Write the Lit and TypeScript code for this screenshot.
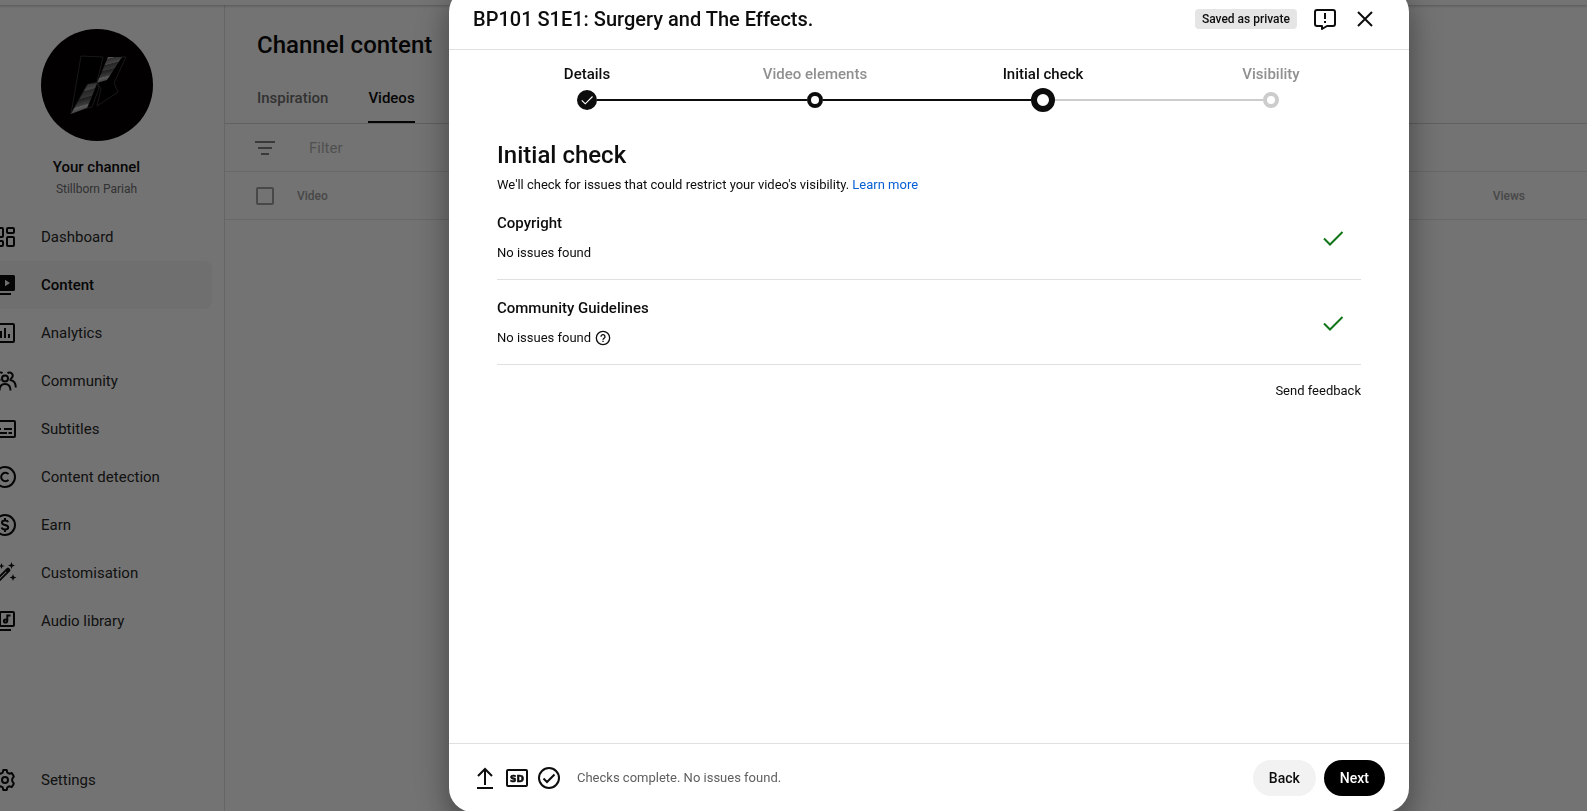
import { LitElement, html, css, svg, nothing } from "lit";
import { customElement, state } from "lit/decorators.js";
import { classMap } from "lit/directives/class-map.js";

const icon = (body: unknown, size = 24, label = "") => html`<svg
  width=${size}
  height=${size}
  viewBox="0 0 24 24"
  fill="none"
  stroke="currentColor"
  stroke-width="2"
  role=${label ? "img" : nothing}
  aria-label=${label || nothing}
  aria-hidden=${label ? nothing : "true"}
>${body}</svg>`;

const glyphs = {
  dashboard: svg`<rect x="3" y="3" width="7" height="9" rx="1"/><rect x="14" y="3" width="7" height="5" rx="1"/><rect x="14" y="12" width="7" height="9" rx="1"/><rect x="3" y="16" width="7" height="5" rx="1"/>`,
  content: svg`<path fill="currentColor" stroke="none" fill-rule="evenodd" d="M7.500 2h13A1.500 1.500 0 0 1 22 3.500v13a1.500 1.500 0 0 1-1.500 1.500h-13A1.500 1.500 0 0 1 6 16.500v-13A1.500 1.500 0 0 1 7.500 2zM12 6.800v6.400l5-3.200z"/><path d="M3 6v13.500a1.500 1.500 0 0 0 1.500 1.500H18"/>`,
  analytics: svg`<rect x="3" y="3" width="18" height="18" rx="1"/><path d="M8 10v7M12 7v10M16 13v4"/>`,
  community: svg`<circle cx="12" cy="9.500" r="3"/><path d="M6.500 21.500c0-4 2.200-6.500 5.500-6.500s5.500 2.500 5.500 6.500M14.500 4.200A3 3 0 1 1 18.600 9c-.9.700-1.300 1.300-1.100 2 3 .5 5.300 3 5.300 7.500M9.500 4.200A3 3 0 1 0 5.400 9c.9.700 1.300 1.300 1.100 2-3 .5-5.300 3-5.300 7.500"/>`,
  subtitles: svg`<rect x="2" y="4" width="20" height="16" rx="1"/><path d="M5 12h3M11 12h8M5 16h9M15.500 16H19"/>`,
  detection: svg`<circle cx="12" cy="12" r="10"/><path d="M15.500 9.200a4.200 4.200 0 1 0 0 5.600"/>`,
  earn: svg`<circle cx="12" cy="12" r="10"/><path d="M15.200 9.200C14.700 8 13.500 7.500 12 7.500c-1.900 0-3 .9-3 2.200 0 3 6.200 1.500 6.200 4.600 0 1.300-1.200 2.200-3.200 2.200-1.700 0-2.900-.7-3.400-2M12 5v3M12 16v3"/>`,
  customise: svg`<path fill="currentColor" stroke="none" fill-rule="evenodd" d="M13.600 7.300a1.900 1.900 0 0 1 2.700 0l.5.500a1.900 1.900 0 0 1 0 2.700L5 22.300 1.700 19zM13 10.500 4.500 19l.6.600 8.500-8.500zM18.500 1l.9 2.600 2.600.9-2.600.9-.9 2.600-.9-2.600-2.600-.9 2.600-.9zM20 13l.9 2.600 2.600.9-2.600.9L20 20l-.9-2.600-2.600-.9 2.600-.9zM8.500 2l.8 2.200 2.200.8-2.200.8-.8 2.200-.8-2.200L5.500 5l2.200-.8z"/>`,
  audio: svg`<rect x="7" y="3" width="14" height="14" rx="1"/><path d="M3 6v13.500a1.500 1.500 0 0 0 1.500 1.500H18"/><circle cx="12.500" cy="12" r="1.600"/><path d="M14.300 12V5.500M14 6.500h3.500"/>`,
  settings: svg`<circle cx="12" cy="12" r="3"/><path stroke-linejoin="round" d="M10.300 2h3.400l.6 2.600 1.900 1.100 2.600-.8 1.700 2.900c.5.800.3 1.200-.4 1.800-.8.700-1 1.500-1 2.400s.2 1.700 1 2.400c.7.600.9 1 .4 1.800l-1.700 2.900-2.600-.8-1.900 1.100-.6 2.600h-3.400l-.6-2.600-1.900-1.100-2.600.8-1.700-2.900c-.5-.8-.3-1.200.4-1.800.8-.7 1-1.500 1-2.400s-.2-1.700-1-2.400c-.7-.6-.9-1-.4-1.800l1.700-2.900 2.600.8 1.900-1.100z"/>`,
  filter: svg`<path d="M2 6h20M5 12h14M8 18h8"/>`,
  feedback: svg`<path stroke-linejoin="round" d="M4 3h16a2 2 0 0 1 2 2v12a2 2 0 0 1-2 2h-6l-5 3v-3H4a2 2 0 0 1-2-2V5a2 2 0 0 1 2-2z"/><path d="M12 6v6M12 14v2"/>`,
  close: svg`<path d="m5 5 14 14M19 5 5 19"/>`,
  upload: svg`<path d="M12 19V3M5 10l7-7 7 7M4 22h16"/>`,
  sd: svg`<rect x="2" y="4" width="20" height="16" rx="1"/><text class="sd" x="12" y="16" text-anchor="middle">SD</text>`,
  checked: svg`<circle cx="12" cy="12" r="10"/><path d="m6.500 12.500 3.500 3.500 7.500-7.500"/>`,
  help: svg`<circle cx="12" cy="12" r="10"/><path d="M9 10a3 3 0 1 1 4.500 2.500c-1 .6-1.500 1-1.500 2M12 16v2"/>`,
  tick: svg`<path d="m3 12.500 6 6L21.500 6"/>`,
};

const channelLogo = html`<svg class="avatar" viewBox="0 0 112 112" role="img" aria-label="Stillborn Pariah">
  <defs>
    <linearGradient id="sheen" x1="0" y1="0" x2=".25" y2="1">
      <stop offset="0" stop-color="#aaa" /><stop offset=".16" stop-color="#bbb" />
      <stop offset=".18" stop-color="#666" /><stop offset=".36" stop-color="#999" />
      <stop offset=".38" stop-color="#555" /><stop offset=".56" stop-color="#777" />
      <stop offset=".58" stop-color="#444" /><stop offset=".78" stop-color="#888" />
      <stop offset=".8" stop-color="#ccc" /><stop offset="1" stop-color="#777" />
    </linearGradient>
  </defs>
  <circle cx="56" cy="56" r="56" fill="#050000" />
  <g stroke="#444" stroke-width=".8">
    <path fill="#000" d="m40 27 22 1-6 25-10 3-16 29z" />
    <path fill="#000" d="m85 28-12 26 4 9-21 14 4-17-4-7 10-3 14-22z" />
    <path fill="#000" d="m56 54-10 25 5-1 7-19z" />
    <path fill="url(#sheen)" stroke="none" d="m67 28 14 0-15 23-10 3z" />
    <path fill="url(#sheen)" stroke="none" d="m47 55 9-1-10 25-16 6z" />
  </g>
</svg>`;

const navItems = [
  { label: "Dashboard", glyph: glyphs.dashboard },
  { label: "Content", glyph: glyphs.content, active: true },
  { label: "Analytics", glyph: glyphs.analytics },
  { label: "Community", glyph: glyphs.community },
  { label: "Subtitles", glyph: glyphs.subtitles },
  { label: "Content detection", glyph: glyphs.detection },
  { label: "Earn", glyph: glyphs.earn },
  { label: "Customisation", glyph: glyphs.customise },
  { label: "Audio library", glyph: glyphs.audio },
];

const base = css`
  * { box-sizing: border-box; }
  :host { display: block; font-family: Roboto, "Liberation Sans", sans-serif; color: #0d0d0d; }
  h1, h2, h3, p, ul, ol { margin: 0; padding: 0; list-style: none; }
  a { color: inherit; text-decoration: none; }
  button { font: inherit; color: inherit; border: 0; background: none; padding: 0; cursor: pointer; }
  svg { display: block; flex: none; }
  .display { font-size: 24px; line-height: 32px; font-weight: 500; }
`;

@customElement("studio-sidebar")
class StudioSidebar extends LitElement {
  static styles = [base, css`
    :host { display: flex; flex-direction: column; border-right: 1px solid #e0e0e0; }
    .channel { display: flex; flex-direction: column; align-items: center; padding: 24px 0 16px; }
    .avatar { width: 112px; height: 112px; }
    .name { margin-top: 16px; font-size: 15px; line-height: 20px; font-weight: 500; }
    .owner { margin-top: 4px; font-size: 12px; line-height: 16px; color: #707070; }
    nav { flex: 1; display: flex; flex-direction: column; justify-content: space-between; padding-bottom: 7px; }
    .item { display: flex; align-items: center; gap: 24px; height: 48px; margin-right: 12px; padding-left: 24px; font-size: 15px; color: #282828; border-radius: 0 8px 8px 0; }
    .item.active { background: #f5f5f5; font-weight: 500; color: #0d0d0d; }
    .item svg { color: #0d0d0d; }
  `];
  private item(label: string, glyph: unknown, active = false) {
    return html`<a href="#" class=${classMap({ item: true, active })} aria-current=${active ? "page" : nothing}>${icon(glyph)}<span>${label}</span></a>`;
  }
  render() {
    return html`
      <div class="channel">${channelLogo}<p class="name">Your channel</p><p class="owner">Stillborn Pariah</p></div>
      <nav aria-label="Studio">
        <ul>${navItems.map((n) => html`<li>${this.item(n.label, n.glyph, n.active)}</li>`)}</ul>
        ${this.item("Settings", glyphs.settings)}
      </nav>`;
  }
}

@customElement("channel-content")
class ChannelContent extends LitElement {
  static styles = [base, css`
    :host { min-width: 0; }
    .display { padding: 24px 32px 16px; }
    .tabs { display: flex; gap: 40px; padding: 0 32px; border-bottom: 1px solid #d4d4d4; }
    .tab { display: flex; align-items: center; height: 46px; padding-bottom: 2px; font-size: 15px; font-weight: 500; color: #707070; border-bottom: 2px solid transparent; }
    .tab.active { color: #0d0d0d; border-color: #0d0d0d; }
    .filter { display: flex; align-items: center; gap: 32px; height: 48px; padding-left: 28px; border-bottom: 1px solid #e6e6e6; color: #808080; }
    input[type="text"] { flex: 1; border: 0; outline: 0; background: none; font: 15px Roboto, sans-serif; padding: 0; }
    input::placeholder { color: #b4b4b4; opacity: 1; }
    table { width: 100%; border-spacing: 0; font-size: 12px; color: #a0a0a0; }
    th { height: 48px; padding: 0; text-align: left; font-weight: 500; border-bottom: 1px solid #e6e6e6; }
    .pick { width: 72px; padding-left: 31px; }
    .views { padding-right: 62px; text-align: right; }
    input[type="checkbox"] { appearance: none; display: block; width: 18px; height: 18px; margin: 0; border: 2px solid #a0a0a0; border-radius: 2px; }
  `];
  render() {
    return html`
      <h1 class="display">Channel content</h1>
      <nav class="tabs"><a class="tab" href="#">Inspiration</a><a class="tab active" href="#">Videos</a></nav>
      <div class="filter">${icon(glyphs.filter)}<input type="text" placeholder="Filter" aria-label="Filter" /></div>
      <table><thead><tr>
        <th class="pick"><input type="checkbox" aria-label="Select all videos" /></th>
        <th scope="col">Video</th><th scope="col" class="views">Views</th>
      </tr></thead></table>`;
  }
}

@customElement("upload-dialog")
class UploadDialog extends LitElement {
  @state() private steps = [
    { label: "Details", kind: "done" },
    { label: "Video elements", kind: "passed" },
    { label: "Initial check", kind: "current" },
    { label: "Visibility", kind: "ahead" },
  ];
  @state() private checks = [
    { title: "Copyright", result: "No issues found", help: false },
    { title: "Community Guidelines", result: "No issues found", help: true },
  ];
  static styles = [base, css`
    :host { display: flex; flex-direction: column; background: #fff; border-radius: 24px; overflow: hidden; }
    header { display: flex; align-items: center; gap: 16px; height: 62px; padding: 0 32px 0 24px; border-bottom: 1px solid #e0e0e0; }
    header h2 { flex: 1; font-size: 20px; line-height: 28px; font-weight: 500; }
    .badge { padding: 0 7px; border-radius: 4px; background: #e5e5e5; font-size: 12px; line-height: 20px; font-weight: 500; }
    .stepper { display: grid; grid-template-columns: repeat(4, 1fr); padding: 14px 24px 0; }
    .step { width: 100%; font-size: 15px; line-height: 20px; font-weight: 500; }
    .passed, .ahead { color: #909090; }
    .rail { display: flex; align-items: center; height: 24px; margin-top: 4px; }
    .rail::before, .rail::after { content: ""; flex: 1; height: 2px; background: #0d0d0d; }
    .done .rail::before, .ahead .rail::after { background: none; }
    .current .rail::after, .ahead .rail::before { background: #ccc; }
    .dot { display: grid; place-items: center; width: 16px; height: 16px; border-radius: 50%; border: 4px solid #0d0d0d; color: #fff; }
    .done .dot { width: 20px; height: 20px; border: 0; background: #0d0d0d; }
    .current .dot { width: 24px; height: 24px; border-width: 6px; }
    .ahead .dot { border-color: #ccc; }
    main { flex: 1; padding: 27px 48px; font-size: 13px; line-height: 20px; }
    .intro { margin-top: 4px; }
    .intro a { color: #065fd4; }
    .check { display: flex; align-items: center; justify-content: space-between; padding: 18px 16px 16px 0; border-bottom: 1px solid #e0e0e0; }
    .check h3 { font-size: 15px; line-height: 20px; font-weight: 500; }
    .result { display: flex; align-items: center; gap: 4px; margin-top: 10px; }
    .ok { color: #107516; }
    .feedback { display: block; margin: 16px 0 0 auto; }
    footer { display: flex; align-items: center; gap: 8px; padding: 16px 24px; border-top: 1px solid #e0e0e0; }
    .status { flex: 1; margin-left: 8px; font-size: 13px; line-height: 20px; color: #606060; }
    .btn { height: 36px; padding: 0 16px; border-radius: 18px; background: #f2f2f2; font-size: 14px; font-weight: 500; }
    .btn.primary { background: #000; color: #fff; }
    .sd { font: 900 9px "DejaVu Sans", sans-serif; fill: currentColor; stroke: currentColor; stroke-width: .6px; }
  `];
  render() {
    return html`
      <header>
        <h2>BP101 S1E1: Surgery and The Effects.</h2>
        <span class="badge">Saved as private</span>
        <button aria-label="Send feedback">${icon(glyphs.feedback)}</button>
        <button aria-label="Close">${icon(glyphs.close)}</button>
      </header>
      <div class="stepper">
        ${this.steps.map((s) => html`<button class="step ${s.kind}">${s.label}
          <span class="rail"><span class="dot">${s.kind === "done" ? icon(glyphs.tick, 14) : nothing}</span></span>
        </button>`)}
      </div>
      <main>
        <h2 class="display">Initial check</h2>
        <p class="intro">We'll check for issues that could restrict your video's visibility. <a href="#">Learn more</a></p>
        ${this.checks.map((c) => html`<section class="check">
          <div><h3>${c.title}</h3>
            <p class="result">${c.result}${c.help ? html`<button aria-label="Help">${icon(glyphs.help, 16)}</button>` : nothing}</p></div>
          <span class="ok">${icon(glyphs.tick, 24, "Passed")}</span>
        </section>`)}
        <button class="feedback">Send feedback</button>
      </main>
      <footer>
        ${icon(glyphs.upload)}${icon(glyphs.sd)}${icon(glyphs.checked)}
        <p class="status">Checks complete. No issues found.</p>
        <button class="btn">Back</button><button class="btn primary">Next</button>
      </footer>`;
  }
}

@customElement("app-root")
class AppRoot extends LitElement {
  static styles = [base, css`
    :host { display: block; height: 100vh; overflow: hidden; background: #fff; }
    .page { display: flex; flex-direction: column; height: 100%; margin-left: -31px; }
    .topbar { height: 5px; box-shadow: 0 1px 3px rgba(0, 0, 0, .25); z-index: 1; }
    .columns { flex: 1; display: grid; grid-template-columns: 256px 1fr; min-height: 0; }
    .scrim { position: fixed; inset: 0; z-index: 2; display: flex; justify-content: center; padding-left: 271px; overflow: hidden; background: rgba(0, 0, 0, .55); }
    upload-dialog { width: 960px; max-width: 100%; height: calc(100% + 13px); margin-top: -12px; box-shadow: 0 12px 24px 2px rgba(0, 0, 0, .24), 0 8px 40px 8px rgba(0, 0, 0, .15); }
  `];
  render() {
    return html`
      <div class="page">
        <div class="topbar"></div>
        <div class="columns"><studio-sidebar></studio-sidebar><channel-content></channel-content></div>
      </div>
      <div class="scrim"><upload-dialog role="dialog" aria-modal="true" aria-label="Upload video"></upload-dialog></div>`;
  }
}
